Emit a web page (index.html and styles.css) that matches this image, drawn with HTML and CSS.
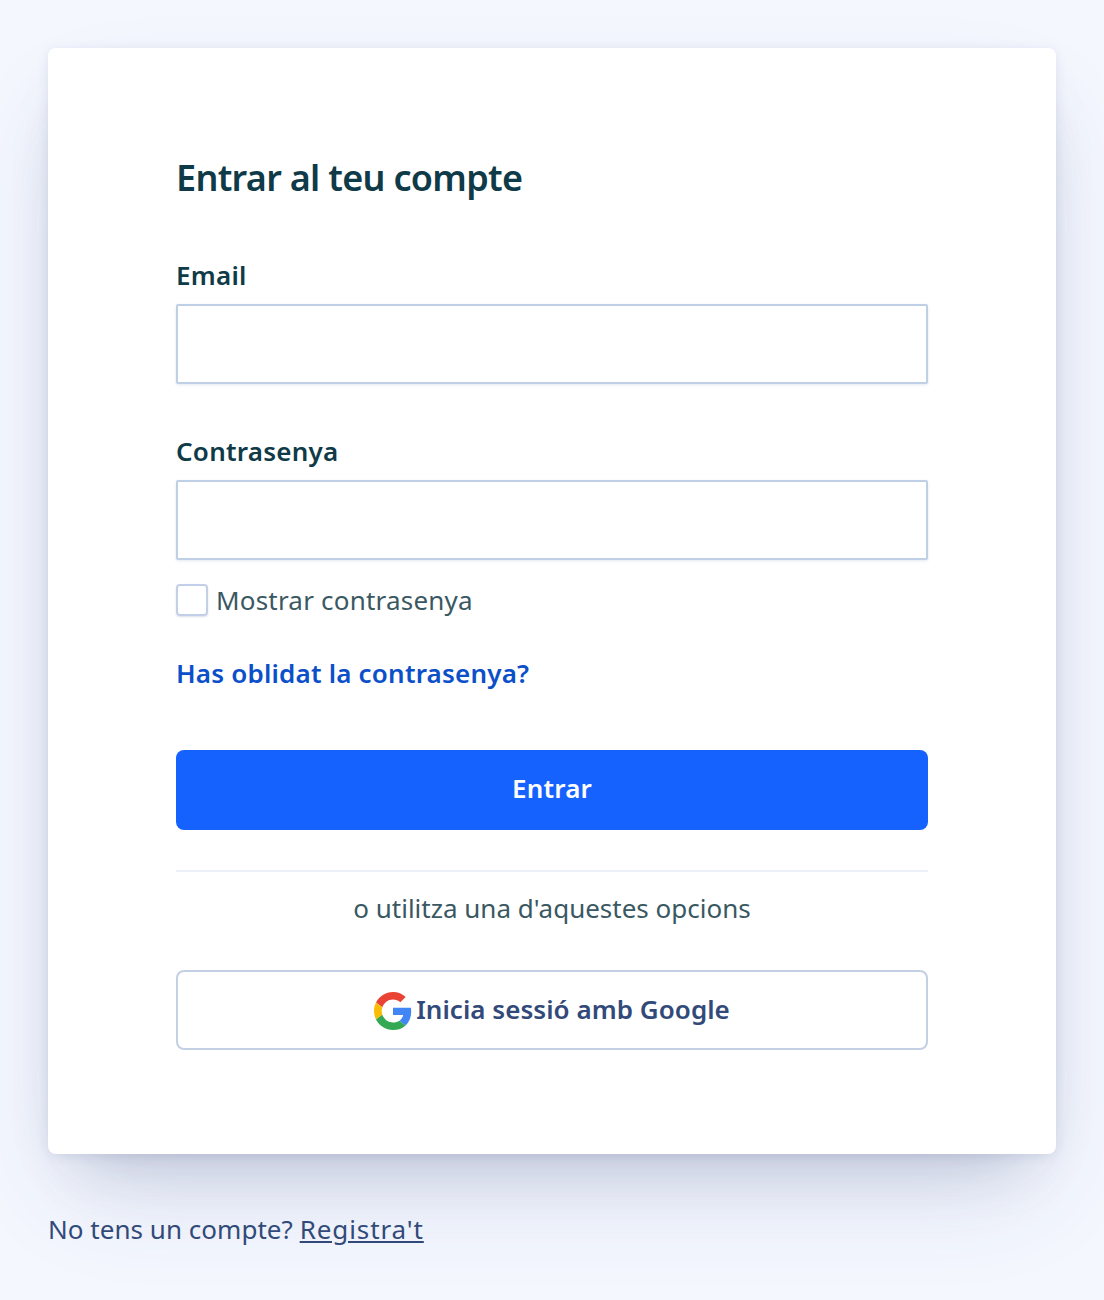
FILE: index.html
```html
<!DOCTYPE html>
<html lang="ca">
<head>
  <meta charset="UTF-8">
  <title>Entrar al teu compte</title>
  <link rel="stylesheet" href="styles.css">
</head>
<body>

  <div class="card">
    <h1 class="title">Entrar al teu compte</h1>

    <form class="form">
      <div class="field">
        <label class="label" for="email">Email</label>
        <input class="input" id="email" type="email">
      </div>

      <div class="field field-password">
        <label class="label" for="password">Contrasenya</label>
        <input class="input" id="password" type="password">
      </div>

      <label class="show-password">
        <span class="checkbox"></span>
        <span>Mostrar contrasenya</span>
      </label>

      <a class="forgot" href="#">Has oblidat la contrasenya?</a>

      <button class="button-primary" type="button">Entrar</button>
    </form>

    <div class="divider"></div>
    <p class="options">o utilitza una d'aquestes opcions</p>

    <button class="button-google" type="button">
      <svg class="google-icon" viewBox="0 0 48 48" width="38" height="38">
        <path fill="#EA4335" d="M24 9.5c3.54 0 6.71 1.22 9.21 3.6l6.85-6.85C35.9 2.38 30.47 0 24 0 14.62 0 6.51 5.38 2.56 13.22l7.98 6.19C12.43 13.72 17.74 9.5 24 9.5z"/>
        <path fill="#4285F4" d="M46.98 24.55c0-1.57-.15-3.09-.38-4.55H24v9.02h12.94c-.58 2.96-2.26 5.48-4.78 7.18l7.73 6c4.51-4.18 7.09-10.36 7.09-17.65z"/>
        <path fill="#FBBC05" d="M10.53 28.59c-.48-1.45-.76-2.99-.76-4.59s.27-3.14.76-4.59l-7.98-6.19C.92 16.46 0 20.12 0 24c0 3.88.92 7.54 2.56 10.78l7.97-6.19z"/>
        <path fill="#34A853" d="M24 48c6.48 0 11.93-2.13 15.89-5.81l-7.73-6c-2.15 1.45-4.92 2.3-8.16 2.3-6.26 0-11.57-4.22-13.47-9.91l-7.98 6.19C6.51 42.62 14.62 48 24 48z"/>
      </svg>
      <span class="google-text">Inicia sessió amb Google</span>
    </button>
  </div>

  <p class="signup">No tens un compte? <a href="#">Registra't</a></p>

</body>
</html>
```

FILE: styles.css
```css
* {
  box-sizing: border-box;
}

html, body {
  height: 100%;
}

body {
  margin: 0;
  padding: 48px;
  background-color: #f4f7fe;
  font-family: "Noto Sans", "Open Sans", sans-serif;
  font-size: 28px;
  color: #0f3a47;
  overflow: hidden;
}

.card {
  background: #fff;
  border-radius: 8px;
  height: 1106px;
  padding: 104px 128px 0;
  box-shadow: 0 50px 100px -20px rgba(50, 70, 130, 0.16), 0 30px 60px -30px rgba(30, 45, 90, 0.22), 0 2px 12px rgba(39, 63, 118, 0.1);
}

.title {
  margin: 0;
  font-size: 36px;
  line-height: 52px;
  font-weight: 600;
  letter-spacing: -0.7px;
  color: #0f3a47;
}

.form {
  display: flex;
  flex-direction: column;
  margin-top: 51px;
}

.field-password {
  margin-top: 47px;
}

.label {
  display: block;
  font-size: 26px;
  line-height: 40px;
  font-weight: 600;
  letter-spacing: 0.25px;
  margin-bottom: 9px;
}

.input {
  display: block;
  width: 100%;
  height: 80px;
  border: 2px solid #bfd0e5;
  border-radius: 2px;
  background: #fff;
  box-shadow: 0 1px 3px rgba(39, 63, 118, 0.12);
}

.show-password {
  display: flex;
  align-items: center;
  gap: 8px;
  margin-top: 24px;
  font-size: 26px;
  line-height: 32px;
  letter-spacing: 0.2px;
  color: #3a5862;
}

.checkbox {
  width: 32px;
  height: 32px;
  border: 2px solid #c3cfe8;
  border-radius: 4px;
  box-shadow: 0 1px 2px rgba(39, 63, 118, 0.16);
}

.forgot {
  margin-top: 37px;
  font-size: 26px;
  line-height: 40px;
  font-weight: 600;
  letter-spacing: 0.2px;
  color: #0b4fc9;
  text-decoration: none;
}

.button-primary {
  margin-top: 57px;
  height: 80px;
  padding: 0 0 4px;
  border: 0;
  border-radius: 8px;
  background: #1662ff;
  color: #fff;
  font-family: inherit;
  font-size: 26px;
  font-weight: 600;
  letter-spacing: 0.2px;
}

.divider {
  margin-top: 40px;
  height: 2px;
  background: #ecf0f8;
}

.options {
  margin: 16px 0 0;
  font-size: 26px;
  line-height: 40px;
  text-align: center;
  color: #3a5862;
}

.button-google {
  display: flex;
  align-items: center;
  justify-content: center;
  gap: 4px;
  width: 100%;
  height: 80px;
  margin-top: 42px;
  padding: 0;
  border: 2px solid #c3d0e4;
  border-radius: 8px;
  background: #fff;
  color: #324a79;
  font-family: inherit;
  font-size: 26px;
  font-weight: 600;
  letter-spacing: 0.04px;
}

.google-icon {
  flex-shrink: 0;
  margin-top: 2px;
}

.google-text {
  margin-bottom: 2px;
}

.signup {
  margin: 55px 0 0;
  font-size: 26px;
  line-height: 40px;
  letter-spacing: 0.03px;
  color: #324a79;
}

.signup a {
  color: #324a79;
  letter-spacing: 0.9px;
}
```
